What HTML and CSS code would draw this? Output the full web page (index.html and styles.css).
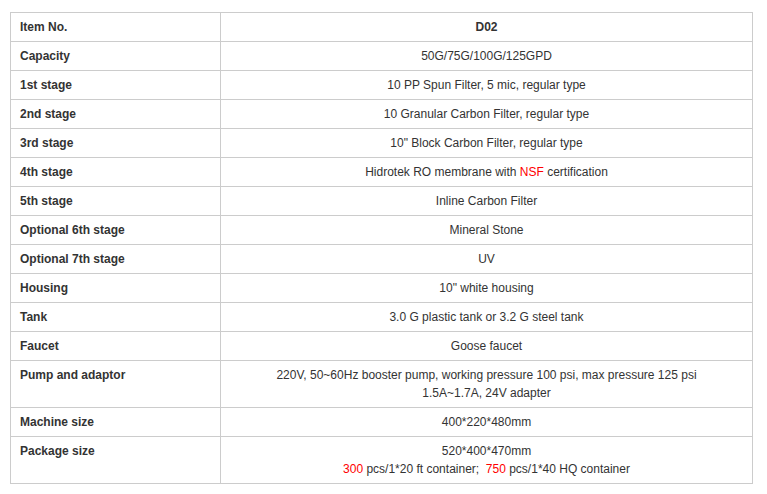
FILE: index.html
```html
<!DOCTYPE html>
<html>
<head>
<meta charset="utf-8">
<link rel="stylesheet" href="styles.css">
</head>
<body>
<div class="wrap">
<table class="spec">
<colgroup><col class="c1"><col class="c2"></colgroup>
<tbody>
<tr><th>Item No.</th><td><b>D02</b></td></tr>
<tr><th>Capacity</th><td>50G/75G/100G/125GPD</td></tr>
<tr><th>1st stage</th><td>10 PP Spun Filter, 5 mic, regular type</td></tr>
<tr><th>2nd stage</th><td>10 Granular Carbon Filter, regular type</td></tr>
<tr><th>3rd stage</th><td>10" Block Carbon Filter, regular type</td></tr>
<tr><th>4th stage</th><td>Hidrotek RO membrane with <span class="red">NSF</span> certification</td></tr>
<tr><th>5th stage</th><td>Inline Carbon Filter</td></tr>
<tr><th>Optional 6th stage</th><td>Mineral Stone</td></tr>
<tr><th>Optional 7th stage</th><td>UV</td></tr>
<tr><th>Housing</th><td>10" white housing</td></tr>
<tr><th>Tank</th><td>3.0 G plastic tank or 3.2 G steel tank</td></tr>
<tr><th>Faucet</th><td>Goose faucet</td></tr>
<tr><th>Pump and adaptor</th><td>220V, 50~60Hz booster pump, working pressure 100 psi, max pressure 125 psi<br>1.5A~1.7A, 24V adapter</td></tr>
<tr><th>Machine size</th><td>400*220*480mm</td></tr>
<tr><th>Package size</th><td>520*400*470mm<br><span class="red">300</span> pcs/1*20 ft container;&nbsp; <span class="red">750</span> pcs/1*40 HQ container</td></tr>
</tbody>
</table>
</div>
</body>
</html>
```
FILE: styles.css
```css
html, body {
  margin: 0;
  padding: 0;
  background: #fff;
}
.wrap {
  padding: 12px 10px;
}
.spec {
  border-collapse: collapse;
  width: 743px;
  table-layout: fixed;
  font-family: "Liberation Sans", Arial, sans-serif;
  font-size: 12px;
  line-height: 18px;
  color: #333;
}
.c1 { width: 210px; }
.spec th, .spec td {
  border: 1px solid #ccc;
  padding: 5px 10px;
  vertical-align: top;
}
.spec th {
  text-align: left;
  font-weight: bold;
  padding-left: 9px;
}
.spec td {
  text-align: center;
}
.red {
  color: #f00;
}
```
